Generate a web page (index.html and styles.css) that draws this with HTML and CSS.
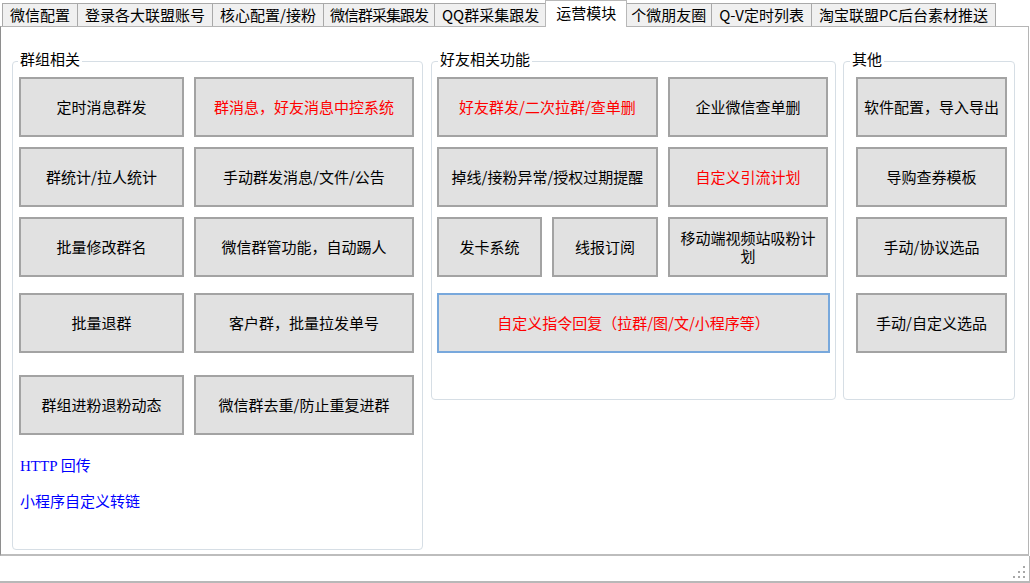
FILE: index.html
```html
<!DOCTYPE html>
<html lang="zh-CN">
<head>
    <meta charset="UTF-8">
    <title>运营模块</title>
    <link rel="stylesheet" href="styles.css">
</head>
<body>

<div class="window">
    <!-- tab strip -->
    <div class="tabs">
        <div class="tab">微信配置</div>
        <div class="tab">登录各大联盟账号</div>
        <div class="tab">核心配置/接粉</div>
        <div class="tab tight">微信群采集跟发</div>
        <div class="tab">QQ群采集跟发</div>
        <div class="tab active">运营模块</div>
        <div class="tab narrow">个微朋友圈</div>
        <div class="tab">Q-V定时列表</div>
        <div class="tab">淘宝联盟PC后台素材推送</div>
    </div>

    <div class="panel">
        <!-- group related -->
        <fieldset class="group group-main">
            <legend>群组相关</legend>
            <div class="row">
                <button class="btn w-165">定时消息群发</button>
                <button class="btn w-220 red">群消息，好友消息中控系统</button>
            </div>
            <div class="row">
                <button class="btn w-165">群统计/拉人统计</button>
                <button class="btn w-220">手动群发消息/文件/公告</button>
            </div>
            <div class="row">
                <button class="btn w-165">批量修改群名</button>
                <button class="btn w-220">微信群管功能，自动踢人</button>
            </div>
            <div class="row row-4">
                <button class="btn w-165">批量退群</button>
                <button class="btn w-220">客户群，批量拉发单号</button>
            </div>
            <div class="row row-5">
                <button class="btn w-165">群组进粉退粉动态</button>
                <button class="btn w-220">微信群去重/防止重复进群</button>
            </div>
            <a class="link first" href="#">HTTP 回传</a>
            <a class="link" href="#">小程序自定义转链</a>
        </fieldset>

        <!-- friend related -->
        <fieldset class="group group-friend">
            <legend>好友相关功能</legend>
            <div class="row">
                <button class="btn w-221 red">好友群发/二次拉群/查单删</button>
                <button class="btn w-160">企业微信查单删</button>
            </div>
            <div class="row">
                <button class="btn w-221">掉线/接粉异常/授权过期提醒</button>
                <button class="btn w-160 red">自定义引流计划</button>
            </div>
            <div class="row">
                <button class="btn w-105">发卡系统</button>
                <button class="btn w-106">线报订阅</button>
                <button class="btn w-160">移动端视频站吸粉计划</button>
            </div>
            <div class="row row-4">
                <button class="btn w-full red focus">自定义指令回复（拉群/图/文/小程序等）</button>
            </div>
        </fieldset>

        <!-- other -->
        <fieldset class="group group-other">
            <legend>其他</legend>
            <div class="row">
                <button class="btn w-full">软件配置，导入导出</button>
            </div>
            <div class="row">
                <button class="btn w-full">导购查券模板</button>
            </div>
            <div class="row">
                <button class="btn w-full">手动/协议选品</button>
            </div>
            <div class="row row-4">
                <button class="btn w-full">手动/自定义选品</button>
            </div>
        </fieldset>
    </div>

    <div class="statusbar">
        <svg class="grip" width="14" height="14" viewBox="0 0 14 14">
            <rect x="10" y="0" width="2" height="2" fill="#a8a8a8"/>
            <rect x="5" y="5" width="2" height="2" fill="#a8a8a8"/>
            <rect x="10" y="5" width="2" height="2" fill="#a8a8a8"/>
            <rect x="0" y="10" width="2" height="2" fill="#a8a8a8"/>
            <rect x="5" y="10" width="2" height="2" fill="#a8a8a8"/>
            <rect x="10" y="10" width="2" height="2" fill="#a8a8a8"/>
        </svg>
    </div>
</div>

</body>
</html>
```

FILE: styles.css
```css
* {
    box-sizing: border-box;
}
body {
    margin: 0;
    background: #fff;
    font-family: "Noto Sans CJK SC", "Liberation Sans", sans-serif;
    font-size: 15px;
    color: #000;
}
.window {
    width: 1030px;
    height: 583px;
    overflow: hidden;
}

/* tabs */
.tabs {
    display: flex;
    align-items: flex-end;
    height: 26px;
    padding-left: 2px;
}
.tab {
    height: 23px;
    line-height: 22px;
    padding: 0 7px;
    border: 1px solid #a9a9a9;
    border-bottom: none;
    background: #f0f0f0;
    margin-right: -1px;
    font-size: 15px;
    white-space: nowrap;
}
.tab.tight {
    letter-spacing: -1px;
    padding: 0 6px;
}
.tab.narrow {
    padding: 0 5px;
}
.tab.active {
    height: 27px;
    line-height: 24px;
    margin: 0 -2px -1px -1px;
    padding: 0 10px;
    background: #fff;
    border-color: #b8b8b8;
    position: relative;
    z-index: 1;
}

/* main panel */
.panel {
    display: flex;
    align-items: flex-start;
    width: 1029px;
    height: 530px;
    padding: 23px 0 0 11px;
    border: 1px solid #b5b5b5;
    border-left-color: #8e8e8e;
    border-bottom: 2px solid #bdbdbd;
}

/* group boxes */
.group {
    margin: 0;
    padding: 5px 6px 0;
    border: 1px solid #d6dee5;
    border-radius: 4px;
    min-width: 0;
}
.group legend {
    padding: 0 2px 4px;
    line-height: 18px;
    font-size: 15px;
}
.group-main {
    width: 411px;
    height: 500px;
    margin-right: 8px;
}
.group-main legend {
    margin-left: -1px;
}
.group-friend {
    width: 405px;
    height: 350px;
    margin-right: 7px;
    padding: 5px 5px 0;
}
.group-friend legend {
    margin-left: 1px;
}
.group-other {
    width: 172px;
    height: 350px;
    padding: 5px 7px 0 12px;
}
.group-other legend {
    margin-left: -6px;
}

.row {
    display: flex;
    gap: 10px;
    margin-bottom: 10px;
}
/* vertical margins collapse, so these are the full gaps */
.row.row-4 {
    margin-top: 16px;
}
.row.row-5 {
    margin-top: 22px;
}

/* buttons */
.btn {
    display: flex;
    align-items: center;
    justify-content: center;
    height: 60px;
    padding: 0 6px;
    margin: 0;
    background: #e1e1e1;
    border: 2px solid #a3a3a3;
    font-family: inherit;
    font-size: 15px;
    line-height: 18px;
    color: #000;
    text-align: center;
}
.btn.red {
    color: #ff0000;
}
.btn.focus {
    border-color: #78a8dc;
}
.w-165 { width: 165px; }
.w-220 { width: 220px; }
.w-221 { width: 221px; }
.w-160 { width: 160px; }
.w-105 { width: 105px; }
.w-106 { width: 106px; }
.w-full { width: 100%; }

/* links */
.link {
    display: block;
    margin: 16px 0 0 1px;
    line-height: 20px;
    color: #0000ff;
    text-decoration: none;
    font-family: "Liberation Serif", "Noto Sans CJK SC", serif;
}
.link.first {
    margin-top: 21px;
}

/* status bar */
.statusbar {
    display: flex;
    justify-content: flex-end;
    align-items: flex-end;
    height: 27px;
    border-right: 1px solid #b5b5b5;
    border-bottom: 2px solid #b8b8b8;
    padding: 0 2px 1px 0;
}
```
